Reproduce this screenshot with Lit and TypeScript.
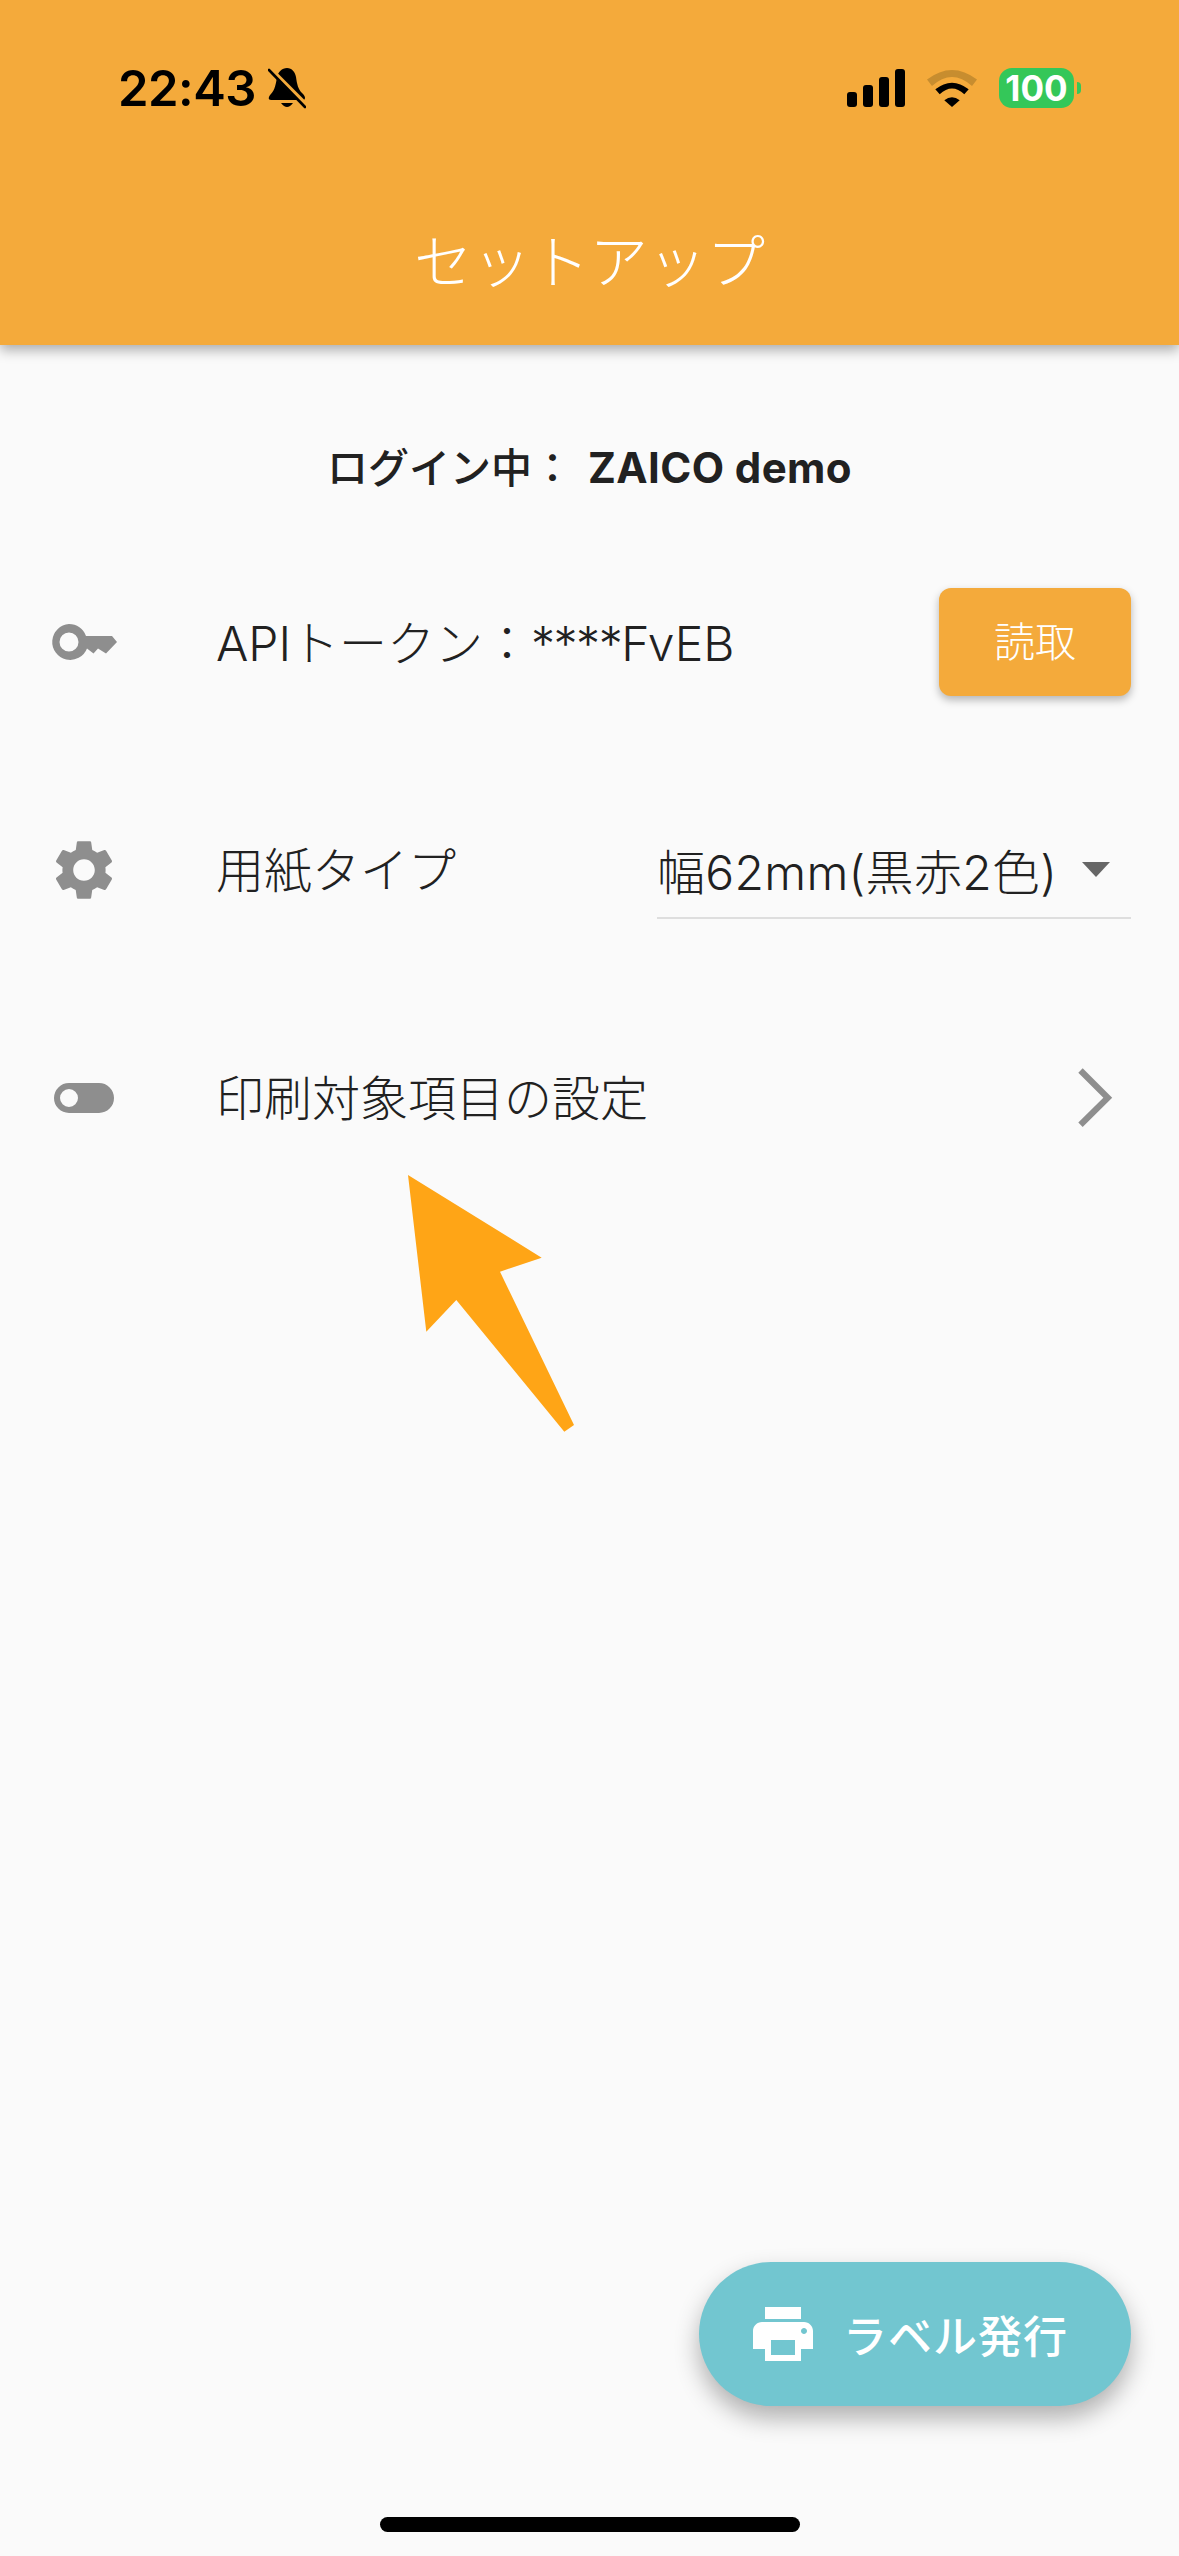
import { LitElement, css, html } from "lit";
import { customElement } from "lit/decorators.js";

@customElement("app-root")
export class AppRoot extends LitElement {
  static styles = css`
    :host {
      display: block;
      position: relative;
      width: 1179px;
      height: 2556px;
      overflow: hidden;
      background: #fafafa;
      color: #212121;
      font-family: Inter, "Noto Sans CJK JP", sans-serif;
    }

    .header {
      height: 345px;
      box-sizing: border-box;
      padding-top: 60px;
      background: #f4aa3b;
      box-shadow: 0 5px 12px rgba(0, 0, 0, 0.32);
      display: flex;
      flex-direction: column;
    }
    .status {
      height: 56px;
      padding: 0 98px 0 118px;
      display: flex;
      align-items: center;
    }
    .time {
      font-size: 49px;
      font-weight: 600;
      color: #000;
      letter-spacing: -0.5px;
    }
    .bell {
      width: 38px;
      height: 42px;
      margin-left: 12px;
    }
    .status-right {
      margin-left: auto;
      display: flex;
      align-items: center;
      gap: 22px;
    }
    .signal {
      width: 58px;
      height: 38px;
    }
    .wifi {
      width: 50px;
      height: 37px;
    }
    .battery {
      display: flex;
      align-items: center;
      gap: 3px;
    }
    .battery-body {
      width: 75px;
      height: 40px;
      border-radius: 13px;
      background: #34c759;
      color: #fff;
      font-size: 35px;
      font-weight: 700;
      line-height: 40px;
      text-align: center;
    }
    .battery-nub {
      width: 4px;
      height: 12px;
      border-radius: 0 6px 6px 0;
      background: #34c759;
    }
    .title {
      margin-top: 111px;
      height: 70px;
      line-height: 70px;
      text-align: center;
      color: #fff;
      font-size: 58.5px;
      font-weight: 300;
    }

    .login {
      height: 183px;
      box-sizing: border-box;
      padding-top: 98px;
      line-height: 50px;
      text-align: center;
      font-size: 42px;
      font-weight: 700;
      white-space: nowrap;
    }
    .login-label {
      font-size: 41px;
      font-weight: 500;
      margin-right: 15px;
    }
    .login-name {
      letter-spacing: 0.4px;
    }

    .row {
      height: 228px;
      box-sizing: border-box;
      padding: 0 48px;
      display: flex;
      align-items: center;
    }
    .row-icon {
      width: 72px;
      height: 72px;
      flex: none;
      fill: #8e8e8e;
    }
    .row-text {
      margin-left: 96px;
      flex: 1;
      font-size: 48px;
      font-weight: 300;
      white-space: nowrap;
    }
    .row-text.raised {
      margin-bottom: 6px;
    }
    .row-text.api {
      margin-bottom: 4px;
    }
    .stars {
      letter-spacing: -1.500px;
    }
    .read-btn {
      width: 192px;
      height: 108px;
      border-radius: 12px;
      background: #f4aa3b;
      color: #fff;
      font-size: 41px;
      font-weight: 300;
      line-height: 108px;
      text-align: center;
      box-shadow: 0 4px 8px rgba(0, 0, 0, 0.28);
    }
    .select {
      width: 474px;
      height: 98px;
      box-sizing: border-box;
      border-bottom: 2px solid #dedede;
      display: flex;
      align-items: center;
      justify-content: space-between;
      padding-right: 21px;
      font-size: 48px;
      font-weight: 300;
      letter-spacing: 0.3px;
      white-space: nowrap;
    }
    .select-arrow {
      width: 0;
      height: 0;
      border-left: 14.500px solid transparent;
      border-right: 14.500px solid transparent;
      border-top: 15px solid #666;
    }
    .chevron {
      width: 60px;
      height: 64px;
      fill: none;
      stroke: #8e8e8e;
      stroke-width: 6.200;
    }

    .arrow {
      position: absolute;
      left: 400px;
      top: 1170px;
      width: 180px;
      height: 270px;
      fill: #ffa516;
    }
    .fab {
      position: absolute;
      left: 699px;
      top: 2262px;
      width: 432px;
      height: 144px;
      box-sizing: border-box;
      padding-left: 48px;
      border-radius: 72px;
      background: #72c6d0;
      color: #fff;
      display: flex;
      align-items: center;
      gap: 24px;
      font-size: 44px;
      font-weight: 500;
      letter-spacing: 1px;
      box-shadow: 0 12px 24px rgba(0, 0, 0, 0.3);
    }
    .fab svg {
      width: 72px;
      height: 72px;
      fill: #fff;
      flex: none;
    }
    .home-bar {
      position: absolute;
      left: 380px;
      top: 2517px;
      width: 420px;
      height: 15px;
      border-radius: 8px;
      background: #000;
    }
  `;

  render() {
    return html`
      <div class="header">
        <div class="status">
          <span class="time">22:43</span>
          <svg class="bell" viewBox="0 0 38 42">
            <path d="M19 1C24 1 27 5 28 10C29 17 30 22 34 26C37 29 38 31 36 33L3 33C0 33 0 30 3 27C7 23 8 16 9 10C10 5 14 1 19 1Z" />
            <path d="M13 36Q19 44 25 36Z" />
            <path d="M1 1L39 39" stroke="#f4aa3b" stroke-width="5" fill="none" />
            <path d="M1 3L37 40" stroke="#000" stroke-width="2.6" stroke-linecap="round" fill="none" />
          </svg>
          <div class="status-right">
            <svg class="signal" viewBox="0 0 58 38">
              <rect x="0" y="23" width="10" height="15" rx="3" />
              <rect x="16" y="16" width="10" height="22" rx="3" />
              <rect x="32" y="8" width="10" height="30" rx="3" />
              <rect x="48" y="0" width="10" height="38" rx="3" />
            </svg>
            <svg class="wifi" viewBox="0 0 50 37">
              <path fill="#c78d2f" d="M0 9.500Q25 -9.500 50 9.500L45 16Q25 -2 5 16Z" />
              <path d="M8.300 19.300Q25 6 41.700 19.300L37.300 24.300Q25 12.500 12.700 24.300Z" />
              <path d="M17.300 30.300Q25 24 32.700 30.300L25 37Z" />
            </svg>
            <div class="battery">
              <div class="battery-body">100</div>
              <div class="battery-nub"></div>
            </div>
          </div>
        </div>
        <div class="title">セットアップ</div>
      </div>

      <div class="login"><span class="login-label">ログイン中：</span><span class="login-name">ZAICO demo</span></div>

      <div class="row">
        <svg class="row-icon" viewBox="0 0 72 72">
          <path fill-rule="evenodd" d="M21 18A18 18 0 0 1 38 30L64 30L69 36L58 47.500L50 42.500L45.500 47.500L39 42.500A18 18 0 1 1 21 18ZM21 26.500A9.500 9.500 0 1 0 21 45.500A9.500 9.500 0 1 0 21 26.500Z" />
        </svg>
        <div class="row-text api">APIトークン：<span class="stars">****</span>FvEB</div>
        <div class="read-btn">読取</div>
      </div>

      <div class="row">
        <svg class="row-icon" viewBox="0 0 24 24">
          <path d="M19.14 12.94c.04-.3.06-.61.06-.94 0-.32-.02-.64-.07-.94l2.03-1.58c.18-.14.23-.41.12-.61l-1.92-3.32c-.12-.22-.37-.29-.59-.22l-2.39.96c-.5-.38-1.03-.7-1.62-.94l-.36-2.54c-.04-.24-.24-.41-.48-.41h-3.84c-.24 0-.43.17-.47.41l-.36 2.54c-.59.24-1.13.57-1.62.94l-2.39-.96c-.22-.08-.47 0-.59.22L2.74 8.87c-.12.21-.08.47.12.61l2.03 1.58c-.05.3-.09.63-.09.94s.02.64.07.94l-2.03 1.58c-.18.14-.23.41-.12.61l1.92 3.32c.12.22.37.29.59.22l2.39-.96c.5.38 1.03.7 1.62.94l.36 2.54c.05.24.24.41.48.41h3.84c.24 0 .44-.17.47-.41l.36-2.54c.59-.24 1.13-.56 1.62-.94l2.39.96c.22.08.47 0 .59-.22l1.92-3.32c.12-.22.07-.47-.12-.61l-2.01-1.58zM12 15.6c-1.98 0-3.6-1.62-3.6-3.6s1.62-3.6 3.6-3.6 3.6 1.62 3.6 3.6-1.62 3.6-3.6 3.6z" />
        </svg>
        <div class="row-text raised">用紙タイプ</div>
        <div class="select">
          <span>幅62mm(黒赤2色)</span>
          <span class="select-arrow"></span>
        </div>
      </div>

      <div class="row">
        <svg class="row-icon" viewBox="0 0 72 72">
          <path fill-rule="evenodd" d="M21 21H51A15 15 0 0 1 51 51H21A15 15 0 0 1 21 21ZM21 27A9 9 0 1 0 21 45A9 9 0 1 0 21 27Z" />
        </svg>
        <div class="row-text raised">印刷対象項目の設定</div>
        <svg class="chevron" viewBox="0 0 60 64">
          <path d="M9.500 4.500L36.800 31.700L9.500 58.700" />
        </svg>
      </div>

      <svg class="arrow" viewBox="0 0 180 270">
        <polygon points="8,5 141.700,87.700 100,101.700 174,255 164.300,261.700 56.300,130 26.300,161.700" />
      </svg>

      <div class="fab">
        <svg viewBox="0 0 24 24">
          <path d="M19 8H5c-1.660 0-3 1.340-3 3v6h4v4h12v-4h4v-6c0-1.660-1.340-3-3-3zm-3 11H8v-5h8v5zm3-7c-.55 0-1-.45-1-1s.45-1 1-1 1 .45 1 1-.45 1-1 1zm-1-9H6v4h12V3z" />
        </svg>
        <span>ラベル発行</span>
      </div>
      <div class="home-bar"></div>
    `;
  }
}
